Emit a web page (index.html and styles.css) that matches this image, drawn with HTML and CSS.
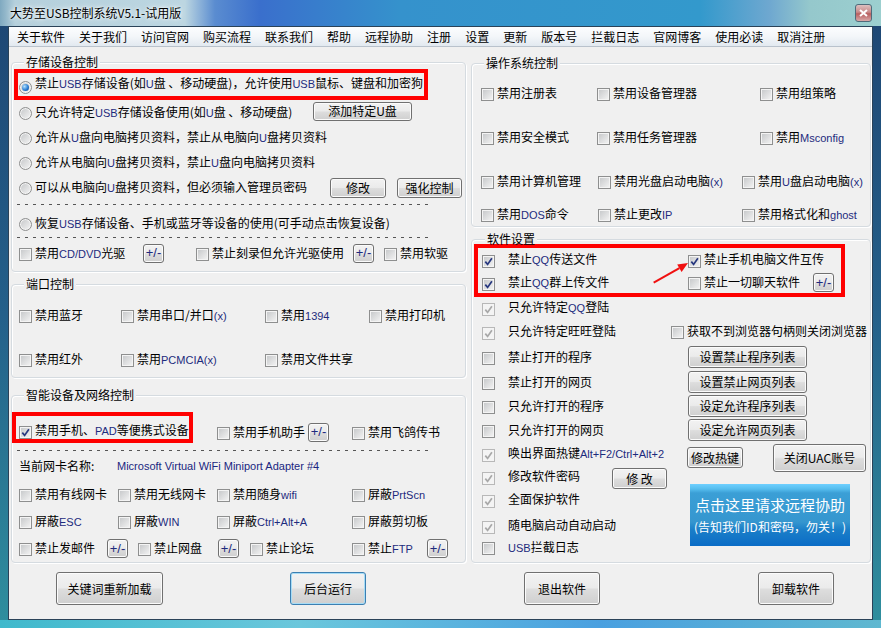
FILE: index.html
```html
<!DOCTYPE html>
<html lang="zh-CN">
<head>
  <meta charset="UTF-8">
  <title>大势至USB控制系统V5.1-试用版</title>
  <link rel="stylesheet" href="styles.css">
</head>
<body>
<div class="window">
  <div class="titlebar">
    <span class="title">大势至USB控制系统V5.1-试用版</span>
    <span class="close"><svg width="9" height="8" viewBox="0 0 9 8"><path d="M1 1 L8 7 M8 1 L1 7" stroke="#fff" stroke-width="2"/></svg></span>
  </div>

  <div class="client">
    <div class="menubar">
      <span>关于软件</span><span>关于我们</span><span>访问官网</span><span>购买流程</span><span>联系我们</span><span>帮助</span><span>远程协助</span><span>注册</span><span>设置</span><span>更新</span><span>版本号</span><span>拦截日志</span><span>官网博客</span><span>使用必读</span><span>取消注册</span>
    </div>

    <div class="panes">
      <!-- 左侧 -->
      <div class="col left">
        <div class="group g-usb">
          <div class="gtitle">存储设备控制</div>
          <div class="hl hl-usb">
            <label class="ck"><span class="rd on"></span>禁止<span class="en">USB</span>存储设备(如<span class="en">U</span>盘 、移动硬盘)，允许使用<span class="en">USB</span>鼠标、键盘和加密狗</label>
          </div>
          <div class="row r-add">
            <label class="ck"><span class="rd"></span>只允许特定<span class="en">USB</span>存储设备使用(如<span class="en">U</span>盘 、移动硬盘)</label>
            <button class="btn b-add">添加特定<span class="en">U</span>盘</button>
          </div>
          <div class="row">
            <label class="ck"><span class="rd"></span>允许从<span class="en">U</span>盘向电脑拷贝资料，禁止从电脑向<span class="en">U</span>盘拷贝资料</label>
          </div>
          <div class="row">
            <label class="ck"><span class="rd"></span>允许从电脑向<span class="en">U</span>盘拷贝资料，禁止<span class="en">U</span>盘向电脑拷贝资料</label>
          </div>
          <div class="row r-pwd">
            <label class="ck"><span class="rd"></span>可以从电脑向<span class="en">U</span>盘拷贝资料，但必须输入管理员密码</label>
            <button class="btn b-mod">修改</button>
            <button class="btn b-strong">强化控制</button>
          </div>
          <div class="dash"></div>
          <div class="row r-restore">
            <label class="ck"><span class="rd"></span>恢复<span class="en">USB</span>存储设备、手机或蓝牙等设备的使用(可手动点击恢复设备)</label>
          </div>
          <div class="dash dash-tight"></div>
          <div class="row r-cd">
            <label class="ck"><span class="cb"></span>禁用<span class="en">CD/DVD</span>光驱</label>
            <button class="btn pm">+/-</button>
            <label class="ck"><span class="cb"></span>禁止刻录但允许光驱使用</label>
            <button class="btn pm">+/-</button>
            <label class="ck"><span class="cb"></span>禁用软驱</label>
          </div>
        </div>

        <div class="group g-port">
          <div class="gtitle">端口控制</div>
          <div class="row">
            <label class="ck"><span class="cb"></span>禁用蓝牙</label>
            <label class="ck"><span class="cb"></span>禁用串口/并口<span class="en">(x)</span></label>
            <label class="ck"><span class="cb"></span>禁用<span class="en">1394</span></label>
            <label class="ck"><span class="cb"></span>禁用打印机</label>
          </div>
          <div class="row">
            <label class="ck"><span class="cb"></span>禁用红外</label>
            <label class="ck"><span class="cb"></span>禁用<span class="en">PCMCIA(x)</span></label>
            <label class="ck"><span class="cb"></span>禁用文件共享</label>
          </div>
        </div>

        <div class="group g-net">
          <div class="gtitle">智能设备及网络控制</div>
          <div class="row r-phone">
            <div class="hl hl-phone">
              <label class="ck"><span class="cb on"><svg viewBox="0 0 11 11"><path d="M2.3 5.6 L4.6 8.4 L8.9 2.2"/></svg></span>禁用手机、<span class="en">PAD</span>等便携式设备</label>
            </div>
            <label class="ck"><span class="cb"></span>禁用手机助手</label>
            <button class="btn pm">+/-</button>
            <label class="ck"><span class="cb"></span>禁用飞鸽传书</label>
          </div>
          <div class="dash dash-net"></div>
          <div class="row r-card">
            <span>当前网卡名称:</span>
            <span class="card-name">Microsoft Virtual WiFi Miniport Adapter #4</span>
          </div>
          <div class="row r-four">
            <label class="ck"><span class="cb"></span>禁用有线网卡</label>
            <label class="ck"><span class="cb"></span>禁用无线网卡</label>
            <label class="ck"><span class="cb"></span>禁用随身<span class="en">wifi</span></label>
            <label class="ck"><span class="cb"></span>屏蔽<span class="en">PrtScn</span></label>
          </div>
          <div class="row r-four">
            <label class="ck"><span class="cb"></span>屏蔽<span class="en">ESC</span></label>
            <label class="ck"><span class="cb"></span>屏蔽<span class="en">WIN</span></label>
            <label class="ck"><span class="cb"></span>屏蔽<span class="en">Ctrl+Alt+A</span></label>
            <label class="ck"><span class="cb"></span>屏蔽剪切板</label>
          </div>
          <div class="row r-last">
            <label class="ck"><span class="cb"></span>禁止发邮件</label>
            <button class="btn pm">+/-</button>
            <label class="ck"><span class="cb"></span>禁止网盘</label>
            <button class="btn pm">+/-</button>
            <label class="ck"><span class="cb"></span>禁止论坛</label>
            <label class="ck"><span class="cb"></span>禁止<span class="en">FTP</span></label>
            <button class="btn pm">+/-</button>
          </div>
        </div>
      </div>

      <!-- 右侧 -->
      <div class="col right">
        <div class="group g-os">
          <div class="gtitle">操作系统控制</div>
          <div class="row r-a">
            <label class="ck"><span class="cb"></span>禁用注册表</label>
            <label class="ck"><span class="cb"></span>禁用设备管理器</label>
            <label class="ck"><span class="cb"></span>禁用组策略</label>
          </div>
          <div class="row r-a">
            <label class="ck"><span class="cb"></span>禁用安全模式</label>
            <label class="ck"><span class="cb"></span>禁用任务管理器</label>
            <label class="ck"><span class="cb"></span>禁用<span class="en">Msconfig</span></label>
          </div>
          <div class="row r-b">
            <label class="ck"><span class="cb"></span>禁用计算机管理</label>
            <label class="ck"><span class="cb"></span>禁用光盘启动电脑<span class="en">(x)</span></label>
            <label class="ck"><span class="cb"></span>禁用<span class="en">U</span>盘启动电脑<span class="en">(x)</span></label>
          </div>
          <div class="row r-b r-b2">
            <label class="ck"><span class="cb"></span>禁用<span class="en">DOS</span>命令</label>
            <label class="ck"><span class="cb"></span>禁止更改<span class="en">IP</span></label>
            <label class="ck"><span class="cb"></span>禁用格式化和<span class="en">ghost</span></label>
          </div>
        </div>

        <div class="group g-soft">
          <div class="gtitle">软件设置</div>
          <div class="hl hl-qq">
            <div class="row r-qq1">
              <label class="ck far"><span class="cb on"><svg viewBox="0 0 11 11"><path d="M2.3 5.6 L4.6 8.4 L8.9 2.2"/></svg></span>禁止<span class="en">QQ</span>传送文件</label>
              <label class="ck"><span class="cb on"><svg viewBox="0 0 11 11"><path d="M2.3 5.6 L4.6 8.4 L8.9 2.2"/></svg></span>禁止手机电脑文件互传</label>
            </div>
            <div class="row r-qq2">
              <label class="ck far"><span class="cb on"><svg viewBox="0 0 11 11"><path d="M2.3 5.6 L4.6 8.4 L8.9 2.2"/></svg></span>禁止<span class="en">QQ</span>群上传文件</label>
              <label class="ck"><span class="cb"></span>禁止一切聊天软件</label>
              <button class="btn pm">+/-</button>
            </div>
          </div>
          <svg class="arrow" width="40" height="30" viewBox="0 0 40 30">
            <path d="M2.7 23.7 L28.4 9.1" stroke="#f01010" stroke-width="2"/>
            <polygon points="37,4 30.6,13 26.2,5.4" fill="#f01010"/>
          </svg>
          <div class="row r-login">
            <label class="ck far"><span class="cb dis"><svg viewBox="0 0 11 11"><path d="M2.3 5.6 L4.6 8.4 L8.9 2.2"/></svg></span>只允许特定<span class="en">QQ</span>登陆</label>
          </div>
          <div class="row r-ww">
            <label class="ck far"><span class="cb dis"><svg viewBox="0 0 11 11"><path d="M2.3 5.6 L4.6 8.4 L8.9 2.2"/></svg></span>只允许特定旺旺登陆</label>
            <label class="ck"><span class="cb"></span>获取不到浏览器句柄则关闭浏览器</label>
          </div>
          <div class="soft-grid">
            <label class="ck far span2"><span class="cb"></span>禁止打开的程序</label>
            <button class="btn b-list span2">设置禁止程序列表</button>
            <label class="ck far span2"><span class="cb"></span>禁止打开的网页</label>
            <button class="btn b-list span2">设置禁止网页列表</button>
            <label class="ck far span2"><span class="cb"></span>只允许打开的程序</label>
            <button class="btn b-list span2">设定允许程序列表</button>
            <label class="ck far span2"><span class="cb"></span>只允许打开的网页</label>
            <button class="btn b-list span2">设定允许网页列表</button>
            <label class="ck far span2"><span class="cb dis"><svg viewBox="0 0 11 11"><path d="M2.3 5.6 L4.6 8.4 L8.9 2.2"/></svg></span>唤出界面热键<span class="en">Alt+F2/Ctrl+Alt+2</span></label>
            <button class="btn b-hot">修改热键</button>
            <button class="btn b-uac">关闭<span class="en">UAC</span>账号</button>
            <label class="ck far"><span class="cb dis"><svg viewBox="0 0 11 11"><path d="M2.3 5.6 L4.6 8.4 L8.9 2.2"/></svg></span>修改软件密码</label>
            <button class="btn b-pwd">修 改</button>
            <div class="banner">
              <span class="banner-main">点击这里请求远程协助</span>
              <span class="banner-sub">(告知我们ID和密码，勿关！)</span>
            </div>
            <label class="ck far span2"><span class="cb dis"><svg viewBox="0 0 11 11"><path d="M2.3 5.6 L4.6 8.4 L8.9 2.2"/></svg></span>全面保护软件</label>
            <label class="ck far span2"><span class="cb dis"><svg viewBox="0 0 11 11"><path d="M2.3 5.6 L4.6 8.4 L8.9 2.2"/></svg></span>随电脑启动自动启动</label>
            <label class="ck far span2"><span class="cb"></span><span class="en">USB</span>拦截日志</label>
          </div>
        </div>
      </div>
    </div>

    <div class="actions">
      <button class="btn act act-wide">关键词重新加载</button>
      <button class="btn act focus">后台运行</button>
      <button class="btn act">退出软件</button>
      <button class="btn act">卸载软件</button>
    </div>
  </div>
</div>
</body>
</html>
```

FILE: styles.css
```css
* {
  box-sizing: border-box;
}

body {
  margin: 0;
  font-family: "Noto Sans CJK SC", sans-serif;
  font-size: 12px;
  line-height: 14px;
  color: #000;
  background: #2a6f8f;
}

.window {
  width: 881px;
  height: 628px;
  display: flex;
  flex-direction: column;
  background:
    linear-gradient(90deg, #7fa9c0 0, #b5d0dc 15px, #bcd6e1 185px, #5a8cd0 215px, #3a6fcc 260px, #3592cc 400px, #3399cc 700px, #6fa8d0 770px, #95c8cc 810px, #9ccfcf 881px) 0 0 / 100% 26px no-repeat,
    linear-gradient(90deg, #3fb9cc 0, #6ac7dc 300px, #4aa0e0 600px, #5fb8d0 881px) 0 620px / 100% 8px no-repeat,
    linear-gradient(#1e4673, #24608a 50%, #2f8f9e);
}

/* 标题栏 */
.titlebar {
  height: 26px;
  flex: none;
  display: flex;
  align-items: center;
  justify-content: space-between;
  padding: 0 9px 0 10px;
}

.title {
  text-shadow: 0 0 6px #fff, 0 0 3px #fff;
}

.close {
  width: 17px;
  height: 18px;
  border: 1px solid #4f6b7a;
  border-radius: 3px;
  background: linear-gradient(#dcc0c0, #c98a8a 45%, #b95f5f 55%, #d8aaaa);
  display: flex;
  align-items: center;
  justify-content: center;
}

.client {
  margin: 0 8px;
  height: 594px;
  border: 1px solid #2a4258;
  background: #f0f0f0;
}

/* 菜单 */
.menubar {
  height: 20px;
  display: flex;
  padding-left: 1px;
  background: linear-gradient(#fcfdfe, #f3f6f9 50%, #e2e9f0);
  border-bottom: 1px solid #b9c2cc;
}

.menubar span {
  padding: 1px 7px 0;
  line-height: 18px;
}

.en {
  font-family: "Liberation Sans", Arial, sans-serif;
  font-size: 11px;
  color: #1d2b7d;
}

/* 分栏 */
.panes {
  display: flex;
  gap: 5px;
  padding: 15px 1px 0 2px;
}

.left {
  width: 455px;
}

.right {
  width: 400px;
}

.group {
  border: 1px solid #d5dbe0;
  border-radius: 4px;
  box-shadow: inset 1px 1px 0 #fff, 1px 1px 0 #fff;
}

.gtitle {
  display: table;
  margin: -8px 0 0 5px;
  padding: 0 2px;
  background: #f0f0f0;
}

.right .gtitle {
  margin-left: 3px;
}

.row {
  display: grid;
  align-items: center;
  justify-items: start;
}

.ck {
  display: block;
  white-space: nowrap;
}

/* 复选框、单选框 */
.cb,
.rd {
  width: 13px;
  height: 13px;
  margin-right: 3px;
  vertical-align: -3px;
  border: 1px solid #8e8f8f;
  background: linear-gradient(135deg, #c4c6c8, #f5f5f5);
  box-shadow: inset 0 0 0 1px #f4f4f4;
  display: inline-flex;
  align-items: center;
  justify-content: center;
}

.ck.far .cb {
  margin-right: 13px;
}

.rd {
  border-radius: 50%;
}

.rd.on::after {
  content: "";
  width: 7px;
  height: 7px;
  border-radius: 50%;
  background: radial-gradient(circle at 35% 35%, #b4e2ff, #2c7fd4 55%, #0b3e86);
}

.cb svg {
  width: 11px;
  height: 11px;
}

.cb svg path {
  fill: none;
  stroke: #27387f;
  stroke-width: 1.7;
}

.cb.dis {
  border-color: #b8b8b8;
  background: #f4f4f4;
  box-shadow: none;
}

.cb.dis svg path {
  stroke: #a8a8a8;
}

.hl {
  border: 4px solid #ff0000;
}

/* 按钮 */
.btn {
  font: inherit;
  color: #000;
  padding: 0;
  border: 1px solid #707070;
  border-radius: 3px;
  background: linear-gradient(#f2f2f2, #ebebeb 47%, #dddddd 53%, #cfcfcf);
  box-shadow: inset 0 0 0 1px #fbfbfb;
  display: flex;
  align-items: center;
  justify-content: center;
  white-space: nowrap;
}

.btn .en {
  color: inherit;
  font-size: 12px;
  font-family: inherit;
}

.pm {
  width: 21px;
  height: 19px;
  font-family: "Liberation Sans", Arial, sans-serif;
  font-size: 13px;
  color: #1d2b7d;
}

/* 存储设备控制 */
.g-usb {
  padding: 0 0 3px 7px;
}

.hl-usb {
  width: 414px;
  height: 31px;
  margin-left: -5px;
  padding-left: 1px;
  display: flex;
  align-items: center;
}

.g-usb .row {
  height: 25px;
}

.r-add {
  grid-template-columns: 294px auto;
}

.b-add {
  width: 99px;
  height: 19px;
  margin-top: -3px;
}

.r-pwd {
  grid-template-columns: 311px 67px auto;
}

.b-mod {
  width: 56px;
  height: 20px;
}

.b-strong {
  width: 65px;
  height: 20px;
}

.dash {
  height: 1px;
  width: 411px;
  margin: 4px 0 4px -2px;
  background: repeating-linear-gradient(90deg, #555 0 3px, transparent 3px 8px);
}

.g-usb .r-restore {
  height: 28px;
}

.dash-tight {
  margin: 0 0 0 -2px;
}

.g-usb .r-cd {
  height: 30px;
  grid-template-columns: 124px 53px 157px 31px auto;
}

/* 端口控制 */
.g-port {
  margin-top: 12px;
  padding: 0 0 5px 7px;
}

.g-port .row {
  height: 26px;
  margin-top: 18px;
  grid-template-columns: 102px 144px 104px auto;
}

.g-port .gtitle + .row {
  margin-top: 11px;
}

/* 智能设备及网络控制 */
.g-net {
  margin-top: 17px;
  padding-left: 7px;
}

.r-phone {
  height: 31px;
  margin: 10px 0 0 -7px;
  grid-template-columns: 205px 91px 44px auto;
  grid-template-rows: 31px;
}

.r-phone > .ck,
.r-phone > .btn {
  margin-top: 9px;
}

.hl-phone {
  width: 181px;
  height: 31px;
  padding: 7px 0 0 3px;
  display: flex;
  align-items: center;
}

.dash-net {
  margin: 7px 0 0 -2px;
}

.r-card {
  height: 30px;
  grid-template-columns: 98px auto;
}

.card-name {
  font-family: "Liberation Sans", Arial, sans-serif;
  font-size: 11px;
  color: #1a2680;
}

.r-four,
.r-last {
  height: 27px;
}

.r-four {
  grid-template-columns: 99px 99px 135px auto;
}

.r-last {
  grid-template-columns: 88px 31px 80px 32px 102px 75px auto;
}

/* 操作系统控制 */
.g-os {
  margin-top: 1px;
  padding-left: 9px;
}

.g-os .row {
  height: 24px;
  margin-top: 20px;
}

.g-os .gtitle + .row {
  margin-top: 11px;
}

.g-os .r-a {
  grid-template-columns: 116px 163px auto;
}

.g-os .r-b {
  grid-template-columns: 117px 144px auto;
}

.g-os .r-b2 {
  margin-top: 9px;
}

/* 软件设置 */
.g-soft {
  position: relative;
  margin-top: 12px;
  padding: 0 0 6px 10px;
}

.hl-qq {
  width: 371px;
  height: 53px;
  margin: -2px 0 0 -8px;
  padding-left: 4px;
}

.r-qq1 {
  height: 24px;
  grid-template-columns: 206px auto;
}

.r-qq2 {
  height: 21px;
  grid-template-columns: 206px 125px auto;
}

.arrow {
  position: absolute;
  left: 179px;
  top: 19px;
}

.r-login {
  height: 22px;
}

.r-ww {
  height: 25px;
  grid-template-columns: 189px auto;
}

.soft-grid {
  display: grid;
  grid-template-columns: 130px 74px 85px auto;
  grid-template-rows: 26px 24px 24px 24px 24px 22px 24px 27px 17px;
  align-items: center;
  justify-items: start;
}

.span2 {
  grid-column: span 2;
}

.b-list {
  width: 119px;
  height: 22px;
  margin-left: 2px;
}

.b-hot {
  width: 56px;
  height: 21px;
  margin: 7px 0 0 1px;
}

.b-uac {
  width: 93px;
  height: 28px;
  margin: 8px 0 0 2px;
}

.b-pwd {
  width: 55px;
  height: 21px;
  margin-top: 3px;
}

.banner {
  grid-column: 3 / span 2;
  grid-row: span 4;
  align-self: start;
  width: 160px;
  height: 62px;
  margin: 18px 0 0 4px;
  display: flex;
  flex-direction: column;
  align-items: center;
  justify-content: center;
  gap: 6px;
  color: #fff;
  background: linear-gradient(#6fd0ff 0, #55bdee 5px, #3b9fd6 9px, #3596cf 38px, #1a7ec8 46px, #0b6cc6 62px);
}

.banner-main {
  font-size: 15px;
  line-height: 18px;
}

.banner-sub {
  font-size: 12px;
  line-height: 14px;
}

/* 底部按钮 */
.actions {
  display: flex;
  padding: 9px 0 0 47px;
}

.act {
  width: 76px;
  height: 33px;
  margin-left: 158px;
}

.act-wide {
  width: 107px;
  margin-left: 0;
}

.act-wide + .act {
  margin-left: 127px;
}

.act.focus {
  border-color: #3c7fb1;
  box-shadow: inset 0 0 0 1px #a6dcf6;
}
```
